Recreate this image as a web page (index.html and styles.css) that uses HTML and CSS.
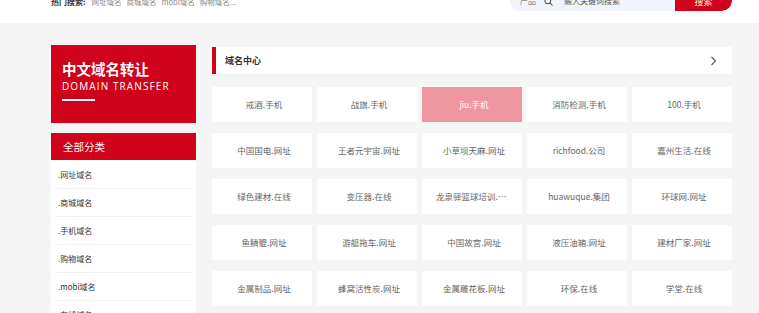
FILE: index.html
```html
<!DOCTYPE html>
<html lang="zh-CN">
<head>
<meta charset="utf-8">
<title>域名中心</title>
<link rel="stylesheet" href="styles.css">
</head>
<body>
<header class="topbar">
  <div class="topbar-inner">
    <div class="hot">
      <span class="hot-label">热门搜索:</span>
      <a class="hot-item">网址域名</a>
      <a class="hot-item">商城域名</a>
      <a class="hot-item">mobi域名</a>
      <a class="hot-item">购物域名...</a>
    </div>
    <div class="search">
      <span class="search-type">产品</span>
      <svg class="search-icon" width="9" height="9" viewBox="0 0 10 10"><circle cx="4.2" cy="4.2" r="3.2" fill="none" stroke="#555" stroke-width="1.2"/><line x1="6.6" y1="6.6" x2="9.2" y2="9.2" stroke="#555" stroke-width="1.2" stroke-linecap="round"/></svg>
      <span class="search-input">输入关键词搜索</span>
      <span class="search-btn">搜索</span>
    </div>
  </div>
</header>
<div class="page">
  <aside class="sidebar">
    <div class="brand">
      <div class="brand-title">中文域名转让</div>
      <div class="brand-sub">DOMAIN TRANSFER</div>
      <div class="brand-line"></div>
    </div>
    <div class="cat-head">全部分类</div>
    <ul class="cat-list">
      <li>.网址域名</li>
      <li>.商城域名</li>
      <li>.手机域名</li>
      <li>.购物域名</li>
      <li>.mobi域名</li>
      <li>.在线域名</li>
    </ul>
  </aside>
  <main class="main">
    <div class="panel-head">
      <span class="panel-title">域名中心</span>
      <svg class="chev" width="7" height="10" viewBox="0 0 7 10"><polyline points="1.5,1 5.5,5 1.5,9" fill="none" stroke="#555" stroke-width="1.1"/></svg>
    </div>
    <div class="grid">
      <a class="cell">戒酒.手机</a>
      <a class="cell">战旗.手机</a>
      <a class="cell active">jiu.手机</a>
      <a class="cell">消防检测.手机</a>
      <a class="cell">100.手机</a>
      <a class="cell">中国国电.网址</a>
      <a class="cell">王者元宇宙.网址</a>
      <a class="cell">小草坝天麻.网址</a>
      <a class="cell">richfood.公司</a>
      <a class="cell">嘉州生活.在线</a>
      <a class="cell">绿色建材.在线</a>
      <a class="cell">变压器.在线</a>
      <a class="cell">龙泉驿篮球培训.在线</a>
      <a class="cell">huawuque.集团</a>
      <a class="cell">环球网.网址</a>
      <a class="cell">鱼鳞貔.网址</a>
      <a class="cell">游艇拖车.网址</a>
      <a class="cell">中国故宫.网址</a>
      <a class="cell">液压油箱.网址</a>
      <a class="cell">建材厂家.网址</a>
      <a class="cell">金属制品.网址</a>
      <a class="cell">蜂窝活性炭.网址</a>
      <a class="cell">金属雕花板.网址</a>
      <a class="cell">环保.在线</a>
      <a class="cell">学堂.在线</a>
    </div>
  </main>
</div>
</body>
</html>
```
FILE: styles.css
```css
* { box-sizing: border-box; }
html, body { margin: 0; padding: 0; }
body {
  background: #f5f5f5;
  font-family: "Noto Sans CJK SC", "Noto Sans", sans-serif;
  color: #333;
  overflow: hidden;
}
ul { margin: 0; padding: 0; list-style: none; }

.topbar {
  height: 23px;
  background: #fff;
  overflow: hidden;
}
.topbar-inner {
  margin: -9px 0 0 51px;
  width: 681px;
  height: 20px;
  display: flex;
  justify-content: space-between;
  align-items: center;
}
.hot {
  display: flex;
  align-items: center;
  gap: 5px;
  font-size: 7.5px;
  line-height: 10px;
  margin-top: 1px;
}
.hot-label { font-weight: 700; color: #333; font-size: 8px; margin-right: 1px; }
.hot-item { color: #888; }

.search {
  width: 222px;
  height: 20px;
  display: flex;
  align-items: center;
  background: #f1f4fa;
  border-radius: 0 0 10px 10px;
  overflow: hidden;
}
.search-type {
  font-size: 8px;
  color: #777;
  margin-left: 10px;
  line-height: 10px;
}
.search-icon { margin-left: 8px; }
.search-input {
  flex: 1;
  font-size: 8px;
  color: #555;
  margin-left: 11px;
  line-height: 10px;
}
.search-btn {
  width: 57px;
  height: 20px;
  background: #d0021b;
  color: #fff;
  font-size: 9px;
  display: flex;
  align-items: center;
  justify-content: center;
  border-radius: 0 0 10px 0;
  padding-top: 1px;
}

.page {
  display: flex;
  gap: 16px;
  padding: 22px 0 0 51px;
}
.sidebar { width: 145px; flex: none; }
.brand {
  height: 78px;
  background: #d0021b;
  padding: 15px 0 0 11px;
  color: #fff;
}
.brand-title {
  font-size: 14.5px;
  font-weight: 700;
  line-height: 18px;
}
.brand-sub {
  font-family: "Open Sans", "Liberation Sans", sans-serif;
  font-size: 10px;
  letter-spacing: 1.1px;
  line-height: 14px;
  margin-top: 1px;
}
.brand-line {
  width: 33px;
  height: 2px;
  background: #fff;
  margin-top: 6px;
}
.cat-head {
  margin-top: 10px;
  height: 27px;
  background: #d0021b;
  color: #fff;
  font-size: 10.5px;
  line-height: 27px;
  padding-left: 12px;
}
.cat-list {
  background: #fff;
  padding: 1px 4px 0;
}
.cat-list li {
  height: 28px;
  line-height: 28px;
  font-size: 8px;
  color: #333;
  border-bottom: 1px solid #f1f1f1;
  padding-left: 3px;
}

.main { width: 520px; flex: none; margin-top: 2px; }
.panel-head {
  height: 27px;
  background: #fff;
  border-left: 4px solid #d0021b;
  display: flex;
  align-items: center;
  justify-content: space-between;
  padding: 0 15px 0 9px;
}
.panel-title {
  font-size: 9px;
  font-weight: 700;
  color: #333;
}
.grid {
  margin-top: 13px;
  display: grid;
  grid-template-columns: repeat(5, 100px);
  grid-auto-rows: 35px;
  column-gap: 5px;
  row-gap: 11px;
}
.cell {
  background: #fff;
  color: #666;
  font-size: 8.5px;
  line-height: 35px;
  text-align: center;
  padding: 0 10px 0 14px;
  white-space: nowrap;
  overflow: hidden;
  text-overflow: ellipsis;
}
.cell.active {
  background: #ef97a1;
  color: #fff;
}
```
